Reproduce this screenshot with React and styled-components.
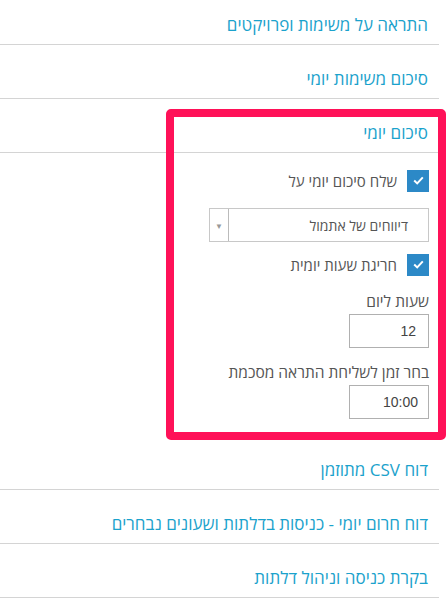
import React from 'react'
import styled, { createGlobalStyle } from 'styled-components'

const Global = createGlobalStyle`
  html, body { margin: 0; padding: 0; background: #fff; }
  body { font-family: "Open Sans", "Liberation Sans", "DejaVu Sans", sans-serif; }
`

const Page = styled.div`
  position: relative;
  width: 439px;
  direction: rtl;
  margin-top: -9px;
`

const Row = styled.div`
  padding: 24px 11px 9px 11px;
  border-bottom: 1px solid #d4d4d4;
  font-size: 17px;
  line-height: 20px;
  color: #1ba2cc;
`

const Section = styled.div`
  padding: 16px 10px 17px 10px;
  display: flex;
  flex-direction: column;
  align-items: flex-start;
  color: #555;
  font-size: 15px;
`

const CheckRow = styled.label`
  display: flex;
  align-items: center;
  gap: 10px;
  height: 23px;
  margin-bottom: ${p => p.$mb || 0}px;
`

const Box = styled.span`
  width: 22px;
  height: 22px;
  background: #2c89c7;
  display: flex;
  align-items: center;
  justify-content: center;
`

const Select = styled.div`
  width: 218px;
  height: 32px;
  border: 1px solid #c8c8c8;
  display: flex;
  align-items: stretch;
  margin-bottom: 11px;
  font-size: 14px;
  color: #555;
`

const SelectText = styled.div`
  flex: 1;
  padding-right: 20px;
  display: flex;
  align-items: center;
`

const Arrow = styled.div`
  width: 18px;
  border-right: 1px solid #bbb;
  display: flex;
  align-items: center;
  justify-content: center;
  color: #999;
  font-size: 8px;
`

const Label = styled.div`
  line-height: 20px;
  font-size: 15.5px;
  margin-top: ${p => p.$mt || 0}px;
  margin-bottom: 3px;
`

const Input = styled.div`
  box-sizing: border-box;
  width: 80px;
  height: 34px;
  border: 1px solid #b0b0b0;
  display: flex;
  align-items: center;
  padding-right: ${p => p.$pr || 12}px;
  font-size: 14px;
  color: #444;
  font-family: "Liberation Sans", sans-serif;
`

const Highlight = styled.div`
  position: absolute;
  left: 166px;
  top: 118px;
  width: 280px;
  height: 331px;
  box-sizing: border-box;
  border: 8px solid #ff1158;
  border-radius: 5px;
  pointer-events: none;
`

const Check = () => (
  <svg width="11" height="9" viewBox="0 0 11 9">
    <path d="M1.2 4.6 L4.2 7.4 L9.8 1.4" fill="none" stroke="#fff" strokeWidth="2" />
  </svg>
)

export default function App() {
  return (
    <>
      <Global />
      <Page>
        <Row>התראה על משימות ופרויקטים</Row>
        <Row>סיכום משימות יומי</Row>
        <Row>סיכום יומי</Row>
        <Section>
          <CheckRow $mb={16}>
            <Box><Check /></Box>
            <span>שלח סיכום יומי על</span>
          </CheckRow>
          <Select>
            <SelectText>דיווחים של אתמול</SelectText>
            <Arrow>▼</Arrow>
          </Select>
          <CheckRow>
            <Box><Check /></Box>
            <span>חריגת שעות יומית</span>
          </CheckRow>
          <Label $mt={15}>שעות ליום</Label>
          <Input>12</Input>
          <Label $mt={14}>בחר זמן לשליחת התראה מסכמת</Label>
          <Input $pr={10}>10:00</Input>
        </Section>
        <Row>דוח CSV מתוזמן</Row>
        <Row>דוח חרום יומי - כניסות בדלתות ושעונים נבחרים</Row>
        <Row>בקרת כניסה וניהול דלתות</Row>
        <Highlight />
      </Page>
    </>
  )
}
